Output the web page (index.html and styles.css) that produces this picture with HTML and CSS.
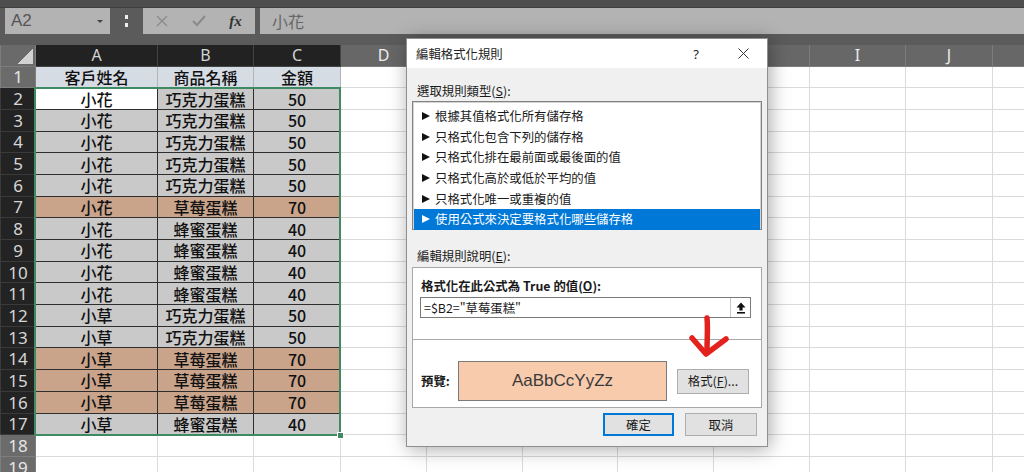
FILE: index.html
```html
<!doctype html>
<html lang="zh-Hant">
<head>
  <meta charset="utf-8">
  <title>編輯格式化規則</title>
  <link rel="stylesheet" href="styles.css">
</head>
<body>
  <div class="app">
    <div class="topbar">
      <div class="ribbon-edge"></div>
      <div class="formula-bar">
        <div class="name-box"><span>A2</span><span class="caret"></span></div>
        <div class="grip"><span></span></div>
        <div class="fx-buttons">
          <span class="slot">
            <svg width="12" height="12" viewBox="0 0 12 12"><path d="M1 1 L11 11 M11 1 L1 11" stroke="#8a8a8a" stroke-width="1.3" fill="none"/></svg>
          </span>
          <span class="slot">
            <svg width="14" height="12" viewBox="0 0 14 12"><path d="M1 6 L5 10 L13 1" stroke="#8a8a8a" stroke-width="2" fill="none"/></svg>
          </span>
          <span class="slot fx">fx</span>
        </div>
        <div class="formula-input">小花</div>
      </div>
    </div>

    <div class="sheet">
      <table class="grid">
        <colgroup>
          <col style="width:35px"><col style="width:122px"><col style="width:96px"><col style="width:87px">
          <col style="width:86px"><col style="width:96px"><col style="width:95px"><col style="width:96px">
          <col style="width:96px"><col style="width:96px"><col style="width:87px"><col style="width:87px">
        </colgroup>
        <thead>
          <tr><th class="corner"></th><th class="sel">A</th><th class="sel">B</th><th class="sel">C</th><th>D</th><th>E</th><th>F</th><th>G</th><th>H</th><th>I</th><th>J</th><th>K</th></tr>
        </thead>
        <tbody>
          <tr><th class="rh">1</th><td class="h1">客戶姓名</td><td class="h1">商品名稱</td><td class="h1">金額</td><td></td><td></td><td></td><td></td><td></td><td></td><td></td><td></td></tr>
          <tr><th class="rh sel">2</th><td class="d act">小花</td><td class="d">巧克力蛋糕</td><td class="d">50</td><td></td><td></td><td></td><td></td><td></td><td></td><td></td><td></td></tr>
          <tr><th class="rh sel">3</th><td class="d">小花</td><td class="d">巧克力蛋糕</td><td class="d">50</td><td></td><td></td><td></td><td></td><td></td><td></td><td></td><td></td></tr>
          <tr><th class="rh sel">4</th><td class="d">小花</td><td class="d">巧克力蛋糕</td><td class="d">50</td><td></td><td></td><td></td><td></td><td></td><td></td><td></td><td></td></tr>
          <tr><th class="rh sel">5</th><td class="d">小花</td><td class="d">巧克力蛋糕</td><td class="d">50</td><td></td><td></td><td></td><td></td><td></td><td></td><td></td><td></td></tr>
          <tr><th class="rh sel">6</th><td class="d">小花</td><td class="d">巧克力蛋糕</td><td class="d">50</td><td></td><td></td><td></td><td></td><td></td><td></td><td></td><td></td></tr>
          <tr><th class="rh sel">7</th><td class="d t">小花</td><td class="d t">草莓蛋糕</td><td class="d t">70</td><td></td><td></td><td></td><td></td><td></td><td></td><td></td><td></td></tr>
          <tr><th class="rh sel">8</th><td class="d">小花</td><td class="d">蜂蜜蛋糕</td><td class="d">40</td><td></td><td></td><td></td><td></td><td></td><td></td><td></td><td></td></tr>
          <tr><th class="rh sel">9</th><td class="d">小花</td><td class="d">蜂蜜蛋糕</td><td class="d">40</td><td></td><td></td><td></td><td></td><td></td><td></td><td></td><td></td></tr>
          <tr><th class="rh sel">10</th><td class="d">小花</td><td class="d">蜂蜜蛋糕</td><td class="d">40</td><td></td><td></td><td></td><td></td><td></td><td></td><td></td><td></td></tr>
          <tr><th class="rh sel">11</th><td class="d">小花</td><td class="d">蜂蜜蛋糕</td><td class="d">40</td><td></td><td></td><td></td><td></td><td></td><td></td><td></td><td></td></tr>
          <tr><th class="rh sel">12</th><td class="d">小草</td><td class="d">巧克力蛋糕</td><td class="d">50</td><td></td><td></td><td></td><td></td><td></td><td></td><td></td><td></td></tr>
          <tr><th class="rh sel">13</th><td class="d">小草</td><td class="d">巧克力蛋糕</td><td class="d">50</td><td></td><td></td><td></td><td></td><td></td><td></td><td></td><td></td></tr>
          <tr><th class="rh sel">14</th><td class="d t">小草</td><td class="d t">草莓蛋糕</td><td class="d t">70</td><td></td><td></td><td></td><td></td><td></td><td></td><td></td><td></td></tr>
          <tr><th class="rh sel">15</th><td class="d t">小草</td><td class="d t">草莓蛋糕</td><td class="d t">70</td><td></td><td></td><td></td><td></td><td></td><td></td><td></td><td></td></tr>
          <tr><th class="rh sel">16</th><td class="d t">小草</td><td class="d t">草莓蛋糕</td><td class="d t">70</td><td></td><td></td><td></td><td></td><td></td><td></td><td></td><td></td></tr>
          <tr><th class="rh sel">17</th><td class="d">小草</td><td class="d">蜂蜜蛋糕</td><td class="d">40</td><td></td><td></td><td></td><td></td><td></td><td></td><td></td><td></td></tr>
          <tr><th class="rh">18</th><td></td><td></td><td></td><td></td><td></td><td></td><td></td><td></td><td></td><td></td><td></td></tr>
          <tr><th class="rh">19</th><td></td><td></td><td></td><td></td><td></td><td></td><td></td><td></td><td></td><td></td><td></td></tr>
        </tbody>
      </table>
      <div class="selection"><span class="handle"></span></div>
    </div>

    <div class="dialog">
      <div class="title-bar">
        <span class="title">編輯格式化規則</span>
        <span class="help">?</span>
        <span class="close">
          <svg width="11" height="11" viewBox="0 0 11 11"><path d="M0.5 0.5 L10.5 10.5 M10.5 0.5 L0.5 10.5" stroke="#333" stroke-width="1" fill="none"/></svg>
        </span>
      </div>
      <div class="dlg-body">
        <div class="label first">選取規則類型(<u>S</u>):</div>
        <ul class="rule-list">
          <li><span class="arrow"></span>根據其值格式化所有儲存格</li>
          <li><span class="arrow"></span>只格式化包含下列的儲存格</li>
          <li><span class="arrow"></span>只格式化排在最前面或最後面的值</li>
          <li><span class="arrow"></span>只格式化高於或低於平均的值</li>
          <li><span class="arrow"></span>只格式化唯一或重複的值</li>
          <li class="active"><span class="arrow"></span>使用公式來決定要格式化哪些儲存格</li>
        </ul>
        <div class="label second">編輯規則說明(<u>E</u>):</div>
        <div class="panel">
          <div class="panel-top">
            <div class="strong">格式化在此公式為 True 的值(<u>O</u>):</div>
            <div class="formula-field">
              <span class="formula-text">=$B2="草莓蛋糕"</span>
              <span class="collapse-btn">
                <svg width="10" height="12" viewBox="0 0 10 12"><path d="M5 0.5 L9.5 5.5 L6.6 5.5 L6.6 8.5 L3.4 8.5 L3.4 5.5 L0.5 5.5 Z" fill="#111"/><rect x="1" y="10" width="8" height="1.6" fill="#111"/></svg>
              </span>
            </div>
          </div>
          <div class="preview-row">
            <span class="strong preview-label">預覽:</span>
            <div class="preview-box">AaBbCcYyZz</div>
            <button class="btn format-btn">格式(<u>F</u>)...</button>
          </div>
        </div>
        <div class="actions">
          <button class="btn ok">確定</button>
          <button class="btn">取消</button>
        </div>
      </div>
    </div>

    <svg class="marker" width="46" height="46" viewBox="0 0 46 46">
      <path d="M21 4 C22 14 21 26 21 36" stroke="#e3211d" stroke-width="5.5" stroke-linecap="round" fill="none"/>
      <path d="M6 24 L20 40 L40 25" stroke="#e3211d" stroke-width="5.5" stroke-linecap="round" stroke-linejoin="round" fill="none"/>
    </svg>
  </div>
</body>
</html>
```

FILE: styles.css
```css
* {
  box-sizing: border-box;
}

body {
  margin: 0;
  background: #fff;
  font-family: "Noto Sans CJK TC", "Noto Sans", sans-serif;
  color: #111;
}

.app {
  position: relative;
  width: 1024px;
  height: 472px;
  overflow: hidden;
}

/* formula bar */

.topbar {
  background: #5b5b5b;
  padding-bottom: 11px;
}

.ribbon-edge {
  height: 8px;
  background: #4d4d4d;
  border-bottom: 1px solid #3e3e3e;
}

.formula-bar {
  height: 26px;
  display: flex;
  padding-left: 5px;
}

.name-box {
  width: 105px;
  background: #b3b3b3;
  display: flex;
  align-items: center;
  justify-content: space-between;
  padding: 0 7px 0 6px;
  color: #555;
  font: 17px "Liberation Sans", sans-serif;
}

.caret {
  width: 0;
  height: 0;
  border-left: 3px solid transparent;
  border-right: 3px solid transparent;
  border-top: 3px solid #444;
}

.grip {
  width: 33px;
  display: flex;
  justify-content: center;
  align-items: center;
}

.grip span {
  height: 12px;
  border-left: 3px dotted #eee;
}

.fx-buttons {
  width: 112px;
  background: #b3b3b3;
  display: flex;
  align-items: center;
}

.slot {
  width: 37px;
  display: flex;
  justify-content: center;
}

.fx {
  font: italic bold 15px "Liberation Serif", serif;
  color: #333;
}

.formula-input {
  flex: 1;
  margin-left: 5px;
  background: #b3b3b3;
  color: #666;
  font-size: 16px;
  line-height: 26px;
  padding-left: 12px;
}

/* sheet */

.sheet {
  position: relative;
  height: 427px;
  overflow: hidden;
  background: #fff;
}

.grid {
  border-collapse: collapse;
  table-layout: fixed;
  width: 1079px;
}

.grid th,
.grid td {
  padding: 0;
  border: 1px solid #dadada;
  text-align: center;
  vertical-align: middle;
  font-size: 16px;
  font-weight: 500;
  line-height: 1;
  white-space: nowrap;
  overflow: hidden;
}

.grid thead th {
  height: 21px;
  background: #676767;
  color: #ececec;
  font: 16px/1 "Noto Sans", sans-serif;
  border-color: #7c7c7c;
  border-top: none;
}

.grid thead th.sel {
  background: #222;
  color: #d4d4d4;
  border-color: #444;
}

.grid thead th.corner {
  background: linear-gradient(to bottom right, transparent 50%, #d2d2d2 50%) no-repeat right 2px bottom 2px / 15px 15px, #6a6a6a;
}

.grid tbody tr {
  height: 21.7px;
}

.grid th.rh {
  background: #6b6b6b;
  color: #e6e6e6;
  font: 17px/1 "Noto Sans", sans-serif;
  border-color: #7e7e7e;
}

.grid th.rh.sel {
  background: #232323;
  color: #d6d6d6;
  border-color: #3a3a3a;
}

.grid td.h1 {
  background: #d6dce4;
  border-color: #b4b4b4;
}

.grid td.d {
  background: #c9c9c9;
  border-color: #2e2e2e;
}

.grid td.t {
  background: #c9a48b;
}

.grid td.act {
  background: #fff;
}

.selection {
  position: absolute;
  left: 34px;
  top: 42px;
  width: 307px;
  height: 349px;
  border: 2px solid #3f8a63;
}

.handle {
  position: absolute;
  right: -5px;
  bottom: -5px;
  width: 7px;
  height: 7px;
  background: #3f8a63;
  border: 1px solid #fff;
}

/* dialog */

.dialog {
  position: absolute;
  left: 406px;
  top: 38px;
  width: 362px;
  height: 409px;
  background: #f0f0f0;
  border: 1px solid #8f8f8f;
  box-shadow: 2px 2px 18px rgba(0, 0, 0, 0.35);
  display: flex;
  flex-direction: column;
  font-size: 12.4px;
  color: #1a1a1a;
}

.title-bar {
  height: 29px;
  background: #fff;
  display: flex;
  align-items: center;
  padding-left: 9px;
  color: #222;
}

.title {
  flex: 1;
}

.help {
  width: 48px;
  text-align: center;
  font-family: "Noto Sans", sans-serif;
  font-size: 13px;
}

.close {
  width: 46px;
  margin-right: 1px;
  display: flex;
  justify-content: center;
}

.dlg-body {
  flex: 1;
  padding: 0 5px;
}

.label {
  padding-left: 5px;
  line-height: 16px;
}

.label.first {
  margin-top: 15px;
  margin-bottom: 2px;
}

.label.second {
  margin-top: 18px;
  margin-bottom: 3px;
}

.rule-list {
  list-style: none;
  margin: 0;
  height: 129px;
  padding: 4px 1px 0;
  background: #fff;
  border: 1px solid #828282;
  box-shadow: inset 0 0 0 1px #d4d4d4;
}

.rule-list li {
  height: 20.6px;
  display: flex;
  align-items: center;
  padding-left: 8px;
}

.rule-list li.active {
  background: #0078d7;
  color: #fff;
}

.arrow {
  width: 0;
  height: 0;
  border-top: 4px solid transparent;
  border-bottom: 4px solid transparent;
  border-left: 8px solid #111;
  margin-right: 5px;
}

.rule-list li.active .arrow {
  border-left-color: #fff;
}

.panel {
  height: 141px;
  background: #fff;
  border: 1px solid #a8a8a8;
}

.panel-top {
  height: 72px;
  padding: 10px 10px 0 7px;
  border-bottom: 1px solid #a8a8a8;
}

.strong {
  font-weight: bold;
  line-height: 16px;
  padding-left: 1px;
}

.formula-field {
  margin-top: 3px;
  height: 21px;
  border: 1px solid #7a7a7a;
  display: flex;
  align-items: center;
}

.formula-text {
  flex: 1;
  padding-left: 3px;
}

.collapse-btn {
  width: 20px;
  height: 100%;
  border-left: 1px solid #c8c8c8;
  display: flex;
  align-items: center;
  justify-content: center;
}

.preview-row {
  display: flex;
  align-items: center;
  padding: 21px 10px 0 7px;
}

.preview-label {
  width: 38px;
}

.preview-box {
  width: 209px;
  height: 40px;
  background: #f8cbad;
  border: 1px solid #7a7a7a;
  display: flex;
  align-items: center;
  justify-content: center;
  font: 17px "Liberation Sans", sans-serif;
  color: #3a3a3a;
}

.btn {
  height: 23px;
  background: #e1e1e1;
  border: 1px solid #adadad;
  font: 12.4px "Noto Sans CJK TC", sans-serif;
  color: #1a1a1a;
  padding: 0;
}

.format-btn {
  width: 72px;
  height: 25px;
  margin-left: 10px;
}

.actions {
  display: flex;
  justify-content: flex-end;
  gap: 11px;
  padding-top: 5px;
  padding-right: 5px;
}

.actions .btn {
  width: 72px;
}

.actions .ok {
  width: 71px;
  border-color: #0078d7;
  box-shadow: inset 0 0 0 1px #0078d7;
}

.marker {
  position: absolute;
  left: 686px;
  top: 314px;
}
```
